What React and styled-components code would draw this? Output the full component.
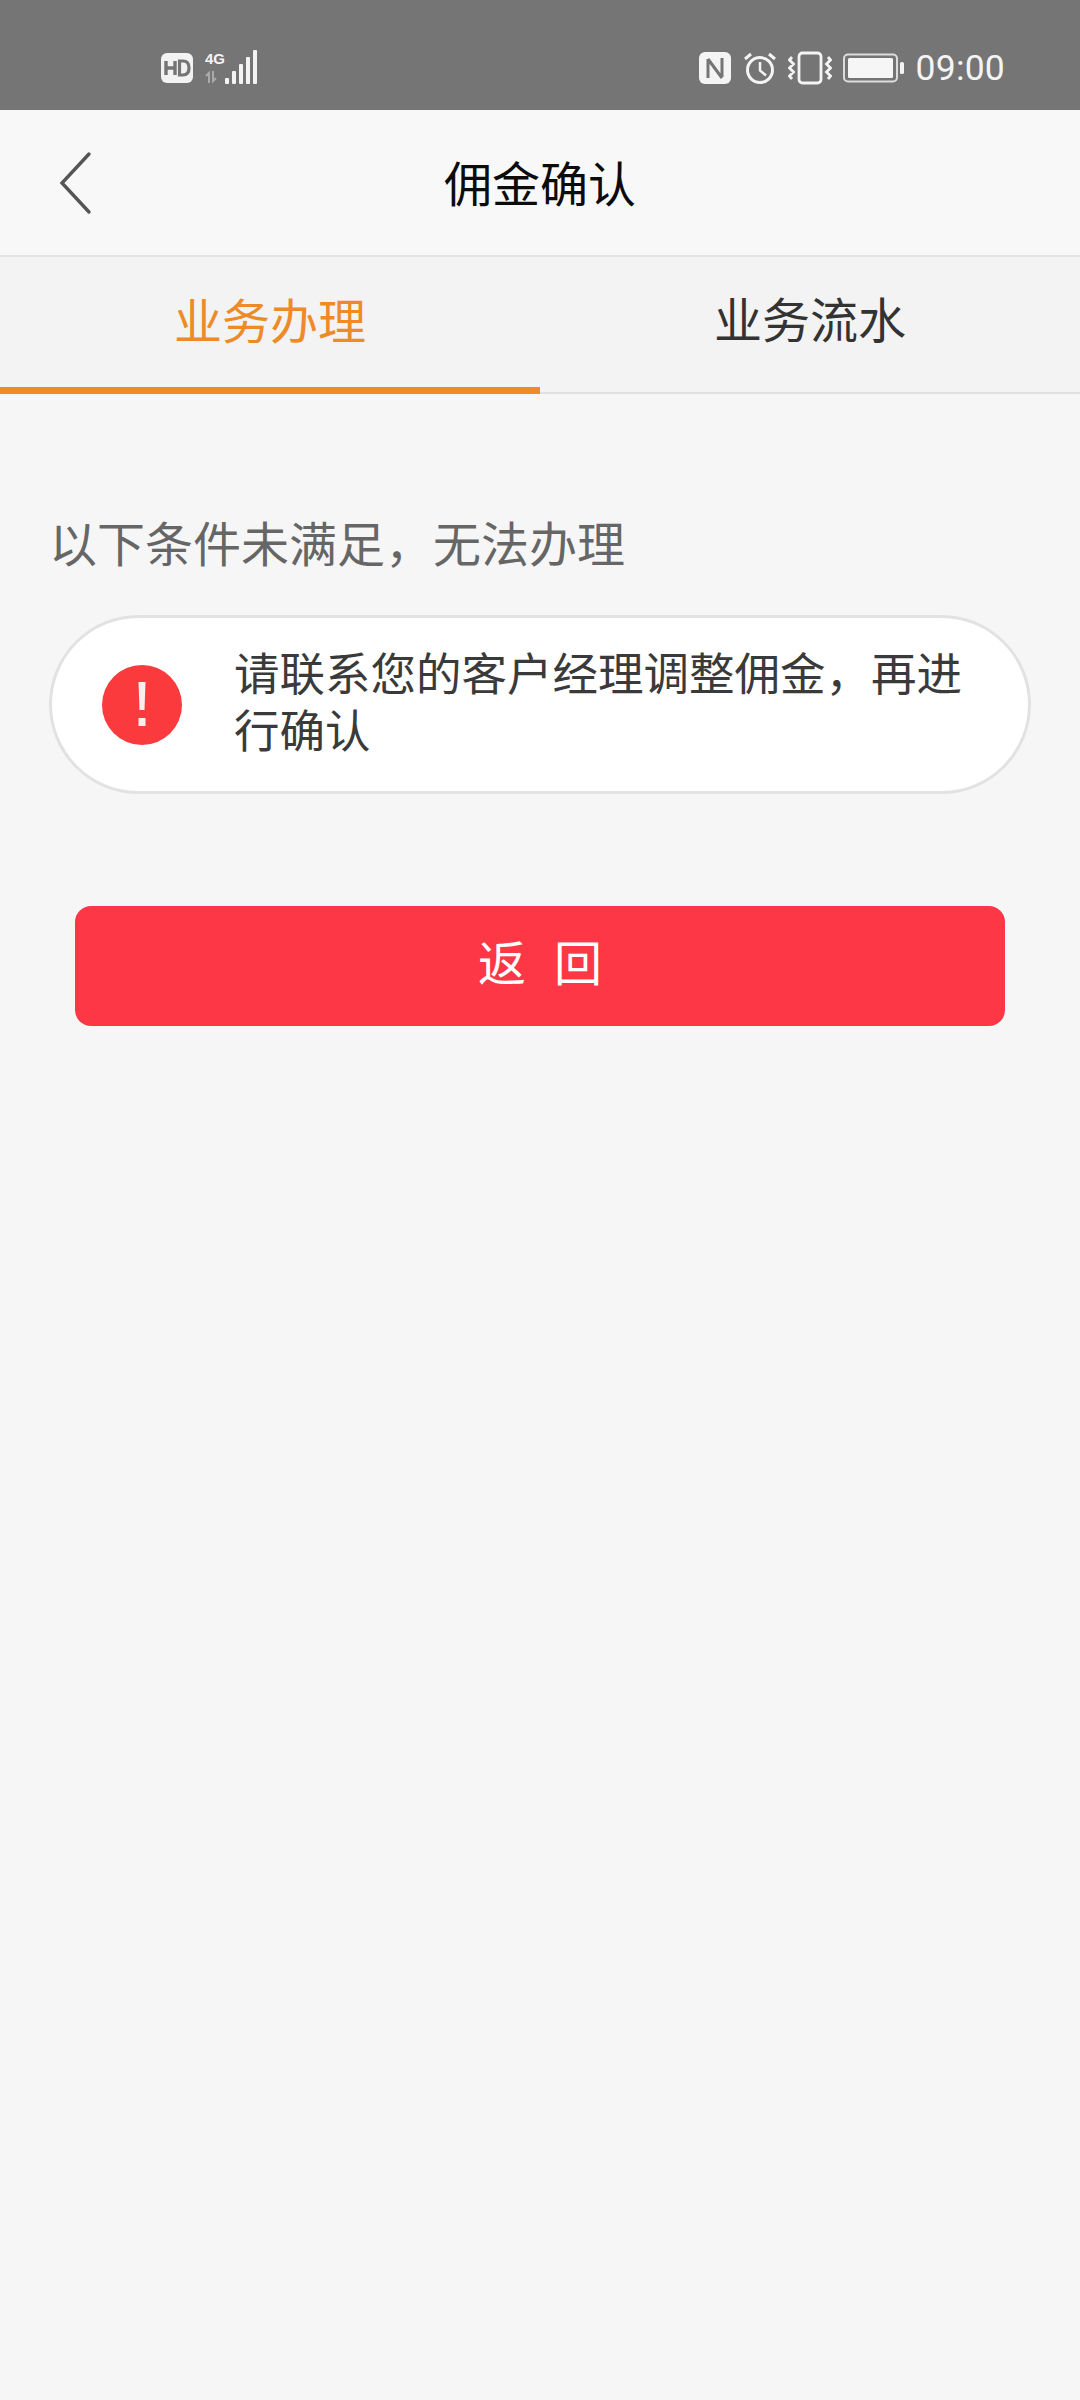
import React from "react";
import styled, { createGlobalStyle } from "styled-components";

const Global = createGlobalStyle`
  html, body { margin: 0; padding: 0; background: #f7f6f7; }
  body { font-family: "Noto Sans CJK SC", "Liberation Sans", sans-serif; }
`;
const Page = styled.div`
  width: 1080px;
  height: 2400px;
  overflow: hidden;
  background: #f7f6f7;
  display: flex;
  flex-direction: column;
`;
const StatusBar = styled.div`
  height: 110px;
  background: #757575;
  display: flex;
  justify-content: space-between;
  align-items: center;
  padding: 26px 75px 0 161px;
  box-sizing: border-box;
  color: #f4f4f4;
`;
const StatusGroup = styled.div`
  display: flex;
  align-items: center;
  gap: ${(p) => p.$gap || 10}px;
`;
const Clock = styled.span`
  font-family: "Roboto", "Liberation Sans", sans-serif;
  font-size: 35.5px;
  font-weight: 400;
  letter-spacing: 0.2px;
  line-height: 40px;
`;
const NavBar = styled.header`
  height: 147px;
  background: #f8f8f8;
  border-bottom: 2px solid #e4e4e4;
  box-sizing: border-box;
  display: flex;
  align-items: center;
  justify-content: center;
  position: relative;
`;
const BackIcon = styled.svg`
  position: absolute;
  left: 57px;
  top: 40px;
`;
const Title = styled.h1`
  margin: 0;
  font-size: 48px;
  font-weight: 400;
  color: #0c0c0c;
  line-height: 60px;
  padding-bottom: 4px;
`;
const Tabs = styled.nav`
  height: 137px;
  display: flex;
  background: #f3f3f3;
  border-bottom: 2px solid #e0e0e0;
  box-sizing: border-box;
`;
const Tab = styled.div`
  flex: 1;
  display: flex;
  align-items: center;
  justify-content: center;
  font-size: 48px;
  color: ${(p) => (p.$active ? "#ee8a27" : "#333333")};
  padding-bottom: ${(p) => (p.$active ? "8px" : "15px")};
  margin-bottom: ${(p) => (p.$active ? "-2px" : "0")};
  border-bottom: ${(p) => (p.$active ? "7px solid #ee8a27" : "none")};
  box-sizing: border-box;
`;
const Content = styled.main`
  display: flex;
  flex-direction: column;
  padding: 0 49px 0 49px;
`;
const Notice = styled.p`
  margin: 117px 0 0 0;
  font-size: 48px;
  line-height: 60px;
  color: #666666;
`;
const Pill = styled.div`
  margin-top: 44px;
  height: 179px;
  box-sizing: border-box;
  background: #fff;
  border: 3px solid #e2e2e2;
  border-radius: 90px;
  display: flex;
  align-items: center;
  padding: 0 60px 0 50px;
  gap: 52px;
`;
const AlertIcon = styled.svg`
  flex: none;
`;
const Message = styled.div`
  font-size: 45.5px;
  line-height: 57px;
  color: #3a3a3a;
  padding-bottom: 9px;
`;
const ReturnButton = styled.button`
  margin: 112px 26px 0 26px;
  height: 120px;
  border: 0;
  border-radius: 16px;
  background: #fe3746;
  color: #fff;
  font-family: inherit;
  font-size: 48px;
  letter-spacing: 28px;
  padding: 0 0 12px 28px;
`;

const Hd = () => (
  <svg width="34" height="30" viewBox="0 0 34 30">
    <rect width="32" height="30" rx="6" fill="#f2f2f2" />
    <path d="M5 8v14M14 8v14M5 15h9" stroke="#757575" strokeWidth="3.4" fill="none" />
    <path d="M18.5 8v14h3.5q6 0 6-7t-6-7z" stroke="#757575" strokeWidth="3.2" fill="none" />
  </svg>
);
const Signal = () => (
  <svg width="56" height="36" viewBox="0 0 56 36" fill="#f4f4f4">
    <text x="0" y="14" fontSize="15" fontWeight="700" fontFamily="Liberation Sans, sans-serif">4G</text>
    <path d="M4 33v-10l-3 3M8 21v10l3-3" stroke="#aaa" strokeWidth="2" fill="none" />
    <rect x="20" y="28" width="4" height="6" rx="1" />
    <rect x="27" y="21" width="4" height="13" rx="1" />
    <rect x="34" y="14" width="4" height="20" rx="1" />
    <rect x="41" y="7" width="4" height="27" rx="1" />
    <rect x="48" y="0" width="4" height="34" rx="1" />
  </svg>
);
const Nfc = () => (
  <svg width="34" height="34" viewBox="0 0 34 34">
    <rect x="1" y="1" width="32" height="32" rx="6" fill="#f4f4f4" />
    <path d="M10 8v19M10 8l14 19M24 7v19" stroke="#757575" strokeWidth="3" fill="none" />
  </svg>
);
const Alarm = () => (
  <svg width="34" height="34" viewBox="0 0 34 34" fill="none" stroke="#f4f4f4" strokeWidth="3">
    <circle cx="17" cy="19" r="12.5" />
    <path d="M17 11v8.5l6 5" strokeWidth="2.5" />
    <path d="M2 8l6-5M32 8l-6-5" />
  </svg>
);
const Vibrate = () => (
  <svg width="44" height="34" viewBox="0 0 44 34" fill="none" stroke="#f4f4f4" strokeWidth="2.8">
    <rect x="11" y="2" width="22" height="30" rx="3.5" />
    <path d="M4 6l-2.5 3 4 4-4 4 4 4-4 4 2.5 3M40 6l2.5 3-4 4 4 4-4 4 4 4-2.5 3" />
  </svg>
);
const Battery = () => (
  <svg width="62" height="30" viewBox="0 0 62 30">
    <rect x="1" y="1.5" width="53" height="27" rx="4" fill="none" stroke="#dcdcdc" strokeWidth="2" />
    <rect x="5" y="5" width="45" height="20" rx="1.5" fill="#f6f6f6" />
    <rect x="57" y="9" width="4" height="12" rx="1.5" fill="#f4f4f4" />
  </svg>
);

export default function App() {
  return (
    <Page>
      <Global />
      <StatusBar>
        <StatusGroup $gap={10}>
          <Hd />
          <Signal />
        </StatusGroup>
        <StatusGroup $gap={11}>
          <Nfc />
          <Alarm />
          <Vibrate />
          <Battery />
          <Clock>09:00</Clock>
        </StatusGroup>
      </StatusBar>
      <NavBar>
        <BackIcon width="36" height="66" viewBox="0 0 36 66" fill="none" stroke="#555" strokeWidth="3.4" strokeLinecap="round">
          <path d="M32 4 5 33l27 29" />
        </BackIcon>
        <Title>佣金确认</Title>
      </NavBar>
      <Tabs>
        <Tab $active>业务办理</Tab>
        <Tab>业务流水</Tab>
      </Tabs>
      <Content>
        <Notice>以下条件未满足，无法办理</Notice>
        <Pill>
          <AlertIcon width="80" height="80" viewBox="0 0 80 80">
            <circle cx="40" cy="40" r="40" fill="#fb3a3e" />
            <path d="M36.5 17h7L42.5 45h-5z" fill="#fdeeee" />
            <rect x="36.5" y="53" width="7" height="8" fill="#fdeeee" />
          </AlertIcon>
          <Message>请联系您的客户经理调整佣金，再进行确认</Message>
        </Pill>
        <ReturnButton>返回</ReturnButton>
      </Content>
    </Page>
  );
}
